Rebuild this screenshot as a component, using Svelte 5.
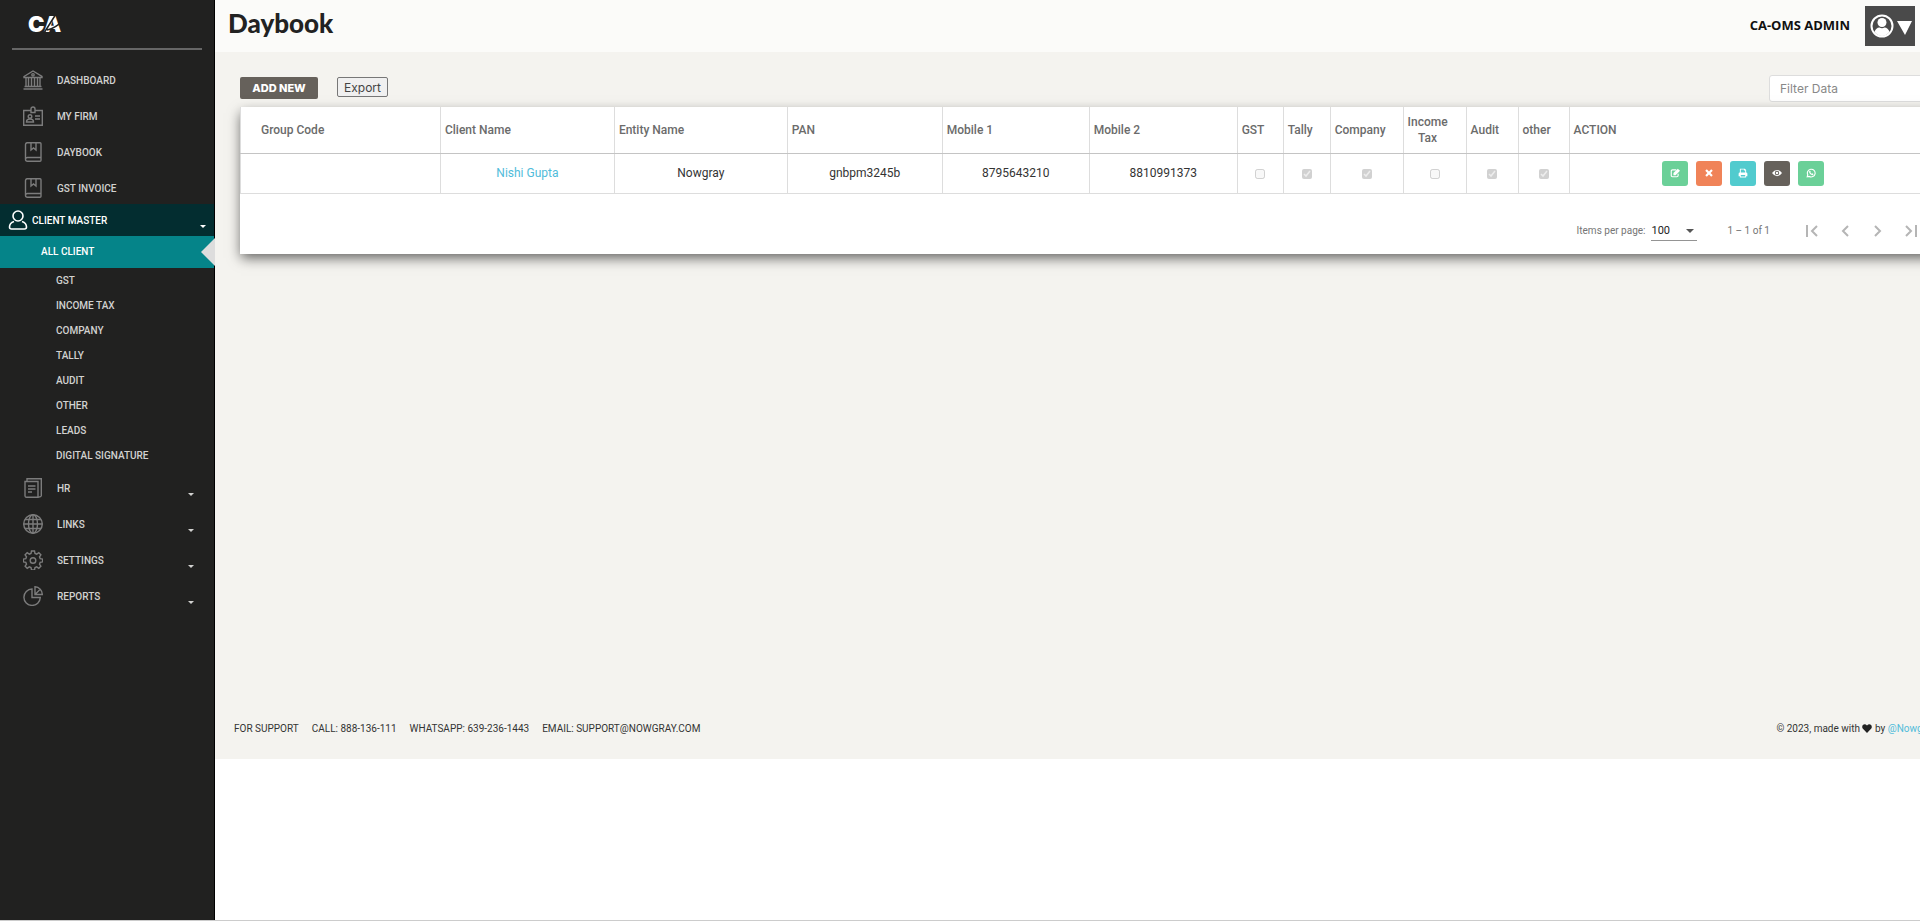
<script lang="ts">
	type Item = { label: string; icon: string; caret?: boolean };

	const topItems: Item[] = [
		{ label: 'Dashboard', icon: 'bank' },
		{ label: 'My Firm', icon: 'badge' },
		{ label: 'Daybook', icon: 'book' },
		{ label: 'GST Invoice', icon: 'book' },
	];

	const bottomItems: Item[] = [
		{ label: 'HR', icon: 'paper', caret: true },
		{ label: 'Links', icon: 'globe', caret: true },
		{ label: 'Settings', icon: 'gear', caret: true },
		{ label: 'Reports', icon: 'pie', caret: true },
	];

	const clientItems = ['GST', 'Income Tax', 'Company', 'Tally', 'Audit', 'Other', 'Leads', 'Digital Signature'];

	const columns = [
		{ key: 'group', label: 'Group Code', size: 200 },
		{ key: 'name', label: 'Client Name', size: 174 },
		{ key: 'entity', label: 'Entity Name', size: 173 },
		{ key: 'pan', label: 'PAN', size: 155 },
		{ key: 'mobile1', label: 'Mobile 1', size: 147 },
		{ key: 'mobile2', label: 'Mobile 2', size: 148 },
		{ key: 'gst', label: 'GST', size: 46 },
		{ key: 'tally', label: 'Tally', size: 47 },
		{ key: 'company', label: 'Company', size: 73 },
		{ key: 'incomeTax', label: 'Income Tax', size: 63 },
		{ key: 'audit', label: 'Audit', size: 52 },
		{ key: 'other', label: 'other', size: 51 },
		{ key: 'actions', label: 'ACTION', size: 365 },
	];
	const total = columns.reduce((sum, c) => sum + c.size, 0);

	const rows: Record<string, string | boolean>[] = [
		{
			group: '',
			name: 'Nishi Gupta',
			entity: 'Nowgray',
			pan: 'gnbpm3245b',
			mobile1: '8795643210',
			mobile2: '8810991373',
			gst: false,
			tally: true,
			company: true,
			incomeTax: false,
			audit: true,
			other: true,
		},
	];

	const actions = [
		{ name: 'edit', tone: 'green' },
		{ name: 'delete', tone: 'orange' },
		{ name: 'print', tone: 'blue' },
		{ name: 'view', tone: 'dark' },
		{ name: 'whatsapp', tone: 'green' },
	];

	const pages = [
		{ name: 'First page', d: 'M3 2v12M13 3L8 8l5 5' },
		{ name: 'Previous page', d: 'M11 3L6 8l5 5' },
		{ name: 'Next page', d: 'M5 3l5 5-5 5' },
		{ name: 'Last page', d: 'M3 3l5 5-5 5M13 2v12' },
	];
</script>

{#snippet icon(name: string)}
	<svg class="icon" viewBox="0 0 20 20" aria-hidden="true">
		{#if name === 'bank'}
			<path d="M1 6.500L10 1l9 5.500v1H1zM3 8v8M5.500 8v8M8.500 8v8M11.500 8v8M14.500 8v8M17 8v8M1.500 16.500h17M.5 19h19" />
			<circle cx="10" cy="4.800" r="1.200" />
		{:else if name === 'badge'}
			<path d="M8 4.500H.7v14.800h18.600V4.500H12M8 6.500V3a2 2 0 014 0v3.500zM12 10h5M12 13h5M3.500 16c0-4 7-4 7 0z" />
			<circle cx="7" cy="10.500" r="1.800" />
		{:else if name === 'book'}
			<path d="M4 .7h13a1 1 0 011 1v16.600a1 1 0 01-1 1H4.500a2 2 0 01-2-2V2.500A2 2 0 014 .7zM2.500 17a2 2 0 012-1.500H18M8 1v7l2.500-2L13 8V1" />
		{:else if name === 'paper'}
			<path d="M2 3.500h13v15.800H3.500A1.500 1.500 0 012 18zM4 3.500V.8h14.300v17.500M15 19.300l3.300-1M5 8h7.500M5 11h7.500M5 14h4" />
		{:else if name === 'globe'}
			<circle cx="10" cy="10" r="9.300" />
			<ellipse cx="10" cy="10" rx="4.500" ry="9.300" />
			<path d="M10 1v18M.7 10h18.600M2 5.500h16M2 14.500h16" />
		{:else if name === 'gear'}
			<path d="M8.500 1h3l.5 2.400 1.700.7 2.100-1.400 2.100 2.100-1.400 2.100.7 1.700 2.400.5v2.800l-2.400.5-.7 1.700 1.400 2.100-2.100 2.100-2.100-1.400-1.700.7-.5 2.400h-3L8 17.600l-1.700-.7-2.100 1.400-2.100-2.100 1.400-2.100-.7-1.700-2.400-.5V9.100l2.400-.5.7-1.700-1.400-2.100 2.100-2.100 2.100 1.400L8 3.400z" />
			<circle cx="10" cy="10.500" r="2.800" />
		{:else if name === 'pie'}
			<path d="M9 3a8.200 8.200 0 108.300 8.500H9zM12 .8V8.500h7.300A7.600 7.600 0 0012 .8zM12 8.500l5-5" />
		{:else}
			<circle cx="10" cy="6" r="5" />
			<path d="M6 11.500c-3 1-4.500 3-4.500 5.500q0 2 2 2h13q2 0 2-2c0-2.500-1.500-4.500-4.500-5.500" />
		{/if}
	</svg>
{/snippet}

{#snippet actionIcon(name: string)}
	<svg class="glyph" viewBox="0 0 16 16" aria-hidden="true">
		{#if name === 'edit'}
			<path class="line" d="M13 9v3q0 2-2 2H4q-2 0-2-2V5q0-2 2-2h6" />
			<path d="M5.500 8L12.500 1 16 4.500 9 11.500H5.500z" />
		{:else if name === 'delete'}
			<path d="M2 4.500L4.500 2 8 5.500 11.500 2 14 4.500 10.500 8l3.500 3.500-2.500 2.500L8 10.500 4.500 14 2 11.500 5.500 8z" />
		{:else if name === 'print'}
			<path fill-rule="evenodd" d="M3 1h8l2 2v4q2 0 2 2v4h-2v2H3v-2H1V9q0-2 2-2zM4.500 2.500V7h7V4h-2V2.500zM4.500 11v2.500h7V11z" />
		{:else if name === 'view'}
			<path fill-rule="evenodd" d="M0 8q3.500-5 8-5t8 5q-3.500 5-8 5T0 8zM8 4.500a3.500 3.500 0 100 7 3.500 3.500 0 000-7z" />
			<circle cx="8" cy="8" r="2" />
		{:else}
			<path class="line" d="M2 14l.8-3.200A6.200 6.200 0 115.300 13.500z" />
			<path d="M5.500 4.500l1.500.2.600 1.800-.6.800q.8 1.500 2.300 2l.8-.8 1.800 1q0 2-2 2Q5.500 10.500 4.800 6.500z" />
		{/if}
	</svg>
{/snippet}

{#snippet menuItem(item: Item)}
	<li>
		<a class="menu-link" href="#{item.icon}">
			{@render icon(item.icon)}
			<span>{item.label}</span>
			{#if item.caret}<i class="caret"></i>{/if}
		</a>
	</li>
{/snippet}

<div class="wrapper">
	<aside class="sidebar">
		<a class="logo" href="#home" aria-label="CA home">
			<svg viewBox="0 0 44 32">
				<text x="0" y="24">CA</text>
				<path class="cut" d="M16 25L28 6M19 22q9-2 15-9" />
			</svg>
		</a>
		<ul class="menu top">
			{#each topItems as item}
				{@render menuItem(item)}
			{/each}
		</ul>
		<a class="master" href="#clients">
			{@render icon('user')}
			<span>Client Master</span>
			<i class="caret"></i>
		</a>
		<a class="current" href="#all">All Client</a>
		<ul class="submenu">
			{#each clientItems as label}
				<li><a href="#client">{label}</a></li>
			{/each}
		</ul>
		<ul class="menu">
			{#each bottomItems as item}
				{@render menuItem(item)}
			{/each}
		</ul>
	</aside>

	<div class="main">
		<header class="navbar">
			<h1>Daybook</h1>
			<span class="user">CA-OMS ADMIN</span>
			<button class="profile" aria-label="Account menu">
				<svg viewBox="0 0 42 28">
					<circle class="ring" cx="12" cy="14" r="10.500" />
					<circle cx="12" cy="10.500" r="4.500" />
					<path d="M4.500 20q1.500-4.500 5-4.500 2.500 1.500 5 0 3.500 0 5 4.500-7.500 8-15 0zM27 9h15l-7 14z" />
				</svg>
			</button>
		</header>

		<main class="content">
			<div class="toolbar">
				<button class="add">ADD NEW</button>
				<button class="export">Export</button>
				<input class="filter" placeholder="Filter Data" aria-label="Filter Data" />
			</div>

			<section class="card">
				<table>
					<colgroup>
						{#each columns as column}
							<col style="width: {(column.size / total) * 100}%" />
						{/each}
					</colgroup>
					<thead>
						<tr>
							{#each columns as column}
								<th class={column.key}>{column.label}</th>
							{/each}
						</tr>
					</thead>
					<tbody>
						{#each rows as row}
							<tr>
								{#each columns as column}
									<td>
										{#if column.key === 'actions'}
											<div class="buttons">
												{#each actions as action}
													<button class="action {action.tone}" aria-label={action.name}>
														{@render actionIcon(action.name)}
													</button>
												{/each}
											</div>
										{:else if column.key === 'name'}
											<a href="#client">{row.name}</a>
										{:else if typeof row[column.key] === 'boolean'}
											<input type="checkbox" aria-label={column.label} checked={row[column.key] === true} disabled />
										{:else}
											{row[column.key]}
										{/if}
									</td>
								{/each}
							</tr>
						{/each}
					</tbody>
				</table>

				<div class="paginator">
					<label for="page-size">Items per page:</label>
					<div class="select">
						<select id="page-size">
							<option>100</option>
						</select>
						<i class="arrow"></i>
					</div>
					<span class="range">1 – 1 of 1</span>
					<div class="pages">
						{#each pages as page}
							<button aria-label={page.name}>
								<svg viewBox="0 0 16 16"><path d={page.d} /></svg>
							</button>
						{/each}
					</div>
				</div>
			</section>
		</main>

		<footer>
			<span>FOR SUPPORT</span>
			<span>CALL: 888-136-111</span>
			<span>WHATSAPP: 639-236-1443</span>
			<span>EMAIL: SUPPORT@NOWGRAY.COM</span>
			<div class="credit">
				© 2023, made with
				<svg viewBox="0 0 16 14" aria-label="love"><path d="M8 14L1.500 7.500C-2 3.500 3-2.500 8 2c5-4.500 10 1.500 6.500 5.500z" /></svg>
				by <a href="#nowgray">@Nowgray</a>
			</div>
		</footer>
	</div>
</div>

<style>
	:global(body) {
		margin: 0;
		background: #fff;
		overflow: hidden;
	}
	.wrapper {
		box-sizing: border-box;
		display: flex;
		min-height: 100vh;
		overflow: hidden;
		border-bottom: 1px solid #ccc;
		font-family: Roboto, 'Liberation Sans', sans-serif;
		font-size: 12px;
		color: #333;
	}
	button,
	input,
	select {
		box-sizing: border-box;
		font-family: inherit;
		margin: 0;
	}
	a {
		color: inherit;
		text-decoration: none;
	}
	ul {
		list-style: none;
		margin: 0;
		padding: 0;
	}

	.sidebar {
		box-sizing: border-box;
		width: 215px;
		flex: none;
		background: #212120;
		border-right: 1px solid #000;
		color: #d2d2d0;
		font-size: 10px;
		font-weight: 500;
		text-transform: uppercase;
	}
	.logo {
		box-sizing: border-box;
		display: block;
		height: 50px;
		margin: 0 12px;
		padding: 8px 16px;
		border-bottom: 2px solid #666;
	}
	.logo svg {
		display: block;
		width: 44px;
		height: 32px;
	}
	.logo text {
		font: 900 22px Inter, sans-serif;
		fill: #fff;
	}
	.cut {
		fill: none;
		stroke: #212120;
		stroke-width: 1.500;
	}
	.menu.top {
		padding-top: 12px;
	}
	.menu-link {
		display: flex;
		align-items: center;
		gap: 14px;
		height: 36px;
		padding: 0 20px 0 23px;
	}
	.icon {
		flex: none;
		width: 20px;
		height: 20px;
		fill: none;
		stroke: #7c7c7c;
		stroke-width: 1.400;
	}
	.caret {
		margin: 12px 0 0 auto;
		border: 3px solid transparent;
		border-top-color: currentColor;
		border-bottom: 0;
	}
	.master {
		display: flex;
		align-items: center;
		gap: 4px;
		height: 32px;
		margin-top: -2px;
		padding: 0 8px;
		background: #032d30;
		color: #fff;
	}
	.master .icon {
		stroke: #fff;
		stroke-width: 1.600;
	}
	.current {
		position: relative;
		display: block;
		padding-left: 41px;
		background: #058489;
		color: #fff;
		line-height: 32px;
	}
	.current::after {
		content: '';
		position: absolute;
		top: 2px;
		right: -1px;
		border: 14px solid transparent;
		border-right-color: #ddd;
		border-left: 0;
	}
	.submenu {
		padding-bottom: 2px;
	}
	.submenu a {
		display: block;
		padding-left: 56px;
		line-height: 25px;
	}

	.main {
		flex: 1;
		min-width: 0;
	}
	.navbar {
		display: flex;
		align-items: center;
		height: 52px;
		padding: 0 5px 0 13px;
		background: #fbfbf9;
	}
	h1 {
		margin: 0 auto 6px 0;
		font: 900 26px/32px Lato, sans-serif;
		color: #222;
	}
	.user {
		margin: 0 15px 2px 0;
		font: 700 13px/20px 'Open Sans', sans-serif;
		color: #111;
	}
	.profile {
		width: 50px;
		height: 40px;
		padding: 0 2px 0 5px;
		border: 0;
		background: #4a4a4a;
	}
	.profile svg {
		display: block;
		width: 42px;
		height: 28px;
		fill: #fff;
	}
	.profile .ring {
		fill: none;
		stroke: #fff;
		stroke-width: 2;
	}

	/* the card and the filter run past the window edge */
	.content {
		box-sizing: border-box;
		min-height: 645px;
		padding: 23px 0 0 25px;
		background: #f4f3ef;
	}
	.toolbar,
	.card {
		margin-right: -14px;
	}
	.toolbar {
		display: flex;
		align-items: flex-start;
		height: 32px;
		font-family: Inter, sans-serif;
	}
	.add {
		width: 78px;
		height: 22px;
		margin: 2px 19px 0 0;
		padding: 0;
		border: 0;
		border-radius: 2px;
		background: #66615b;
		color: #fff;
		font-size: 11px;
		font-weight: 800;
	}
	.export {
		width: 51px;
		height: 20px;
		margin-top: 2px;
		padding: 0;
		border: 1px solid #777;
		border-radius: 2px;
		background: #f0f0f0;
		color: #444;
		font-size: 12px;
	}
	.filter {
		width: 165px;
		height: 27px;
		margin-left: auto;
		padding: 0 10px;
		border: 1px solid #ddd;
		border-radius: 3px;
		background: #fff;
		font-size: 12px;
	}
	.filter::placeholder {
		color: #888;
	}

	.card {
		position: relative;
		background: #fff;
		box-shadow: 0 5px 12px -1px #0009;
	}
	table {
		width: 100%;
		table-layout: fixed;
		border-collapse: collapse;
	}
	th,
	td {
		box-sizing: border-box;
		border-left: 1px solid #ddd;
		border-bottom: 1px solid #ddd;
	}
	th {
		height: 46px;
		padding: 0 4px;
		border-bottom-color: #c4c4c4;
		color: #6b6b6b;
		font-weight: 500;
		line-height: 16px;
		text-align: left;
	}
	th.group {
		padding-left: 20px;
	}
	th.incomeTax {
		padding-right: 18px;
		text-align: center;
	}
	td {
		height: 40px;
		padding: 0;
		text-align: center;
	}
	td a,
	.credit a {
		color: #51bcda;
	}
	td input {
		width: 10px;
		height: 10px;
		vertical-align: middle;
	}
	.buttons {
		display: flex;
		justify-content: center;
		gap: 8px;
		padding-right: 18px;
	}
	.action {
		display: grid;
		place-items: center;
		width: 26px;
		height: 25px;
		padding: 0;
		border: 0;
		border-radius: 3px;
	}
	.green {
		background: #6bd098;
	}
	.orange {
		background: #f08358;
	}
	.blue {
		background: #51cbce;
	}
	.dark {
		background: #66615b;
	}
	.glyph {
		width: 10px;
		height: 10px;
		fill: #fff;
	}
	.line {
		fill: none;
		stroke: #fff;
		stroke-width: 1.800;
	}

	.paginator {
		display: flex;
		align-items: center;
		justify-content: flex-end;
		height: 46px;
		padding: 14px 6px 0 0;
		color: #757575;
		font-size: 10px;
	}
	.select {
		position: relative;
		margin: 0 30px 0 6px;
	}
	select {
		width: 46px;
		height: 20px;
		padding: 0;
		border: 0;
		border-bottom: 1px solid #949494;
		background: none;
		color: #222;
		font-size: 11px;
		appearance: none;
	}
	.arrow {
		position: absolute;
		top: 8px;
		right: 3px;
		border: 4px solid transparent;
		border-top-color: #555;
		border-bottom: 0;
		pointer-events: none;
	}
	.pages {
		display: flex;
		margin-left: 26px;
	}
	.pages button {
		width: 33px;
		height: 32px;
		padding: 0 8px;
		border: 0;
		background: none;
	}
	.pages svg {
		display: block;
		width: 16px;
		height: 16px;
		fill: none;
		stroke: #b5b5b5;
		stroke-width: 2;
	}

	footer {
		display: flex;
		align-items: center;
		gap: 13px;
		height: 62px;
		padding-left: 19px;
		background: #f4f3ef;
		font-size: 10px;
		white-space: nowrap;
	}
	.credit {
		margin: 0 -16px 0 auto;
	}
	.credit svg {
		width: 10px;
		height: 9px;
		vertical-align: -1px;
		fill: #222;
	}
</style>
